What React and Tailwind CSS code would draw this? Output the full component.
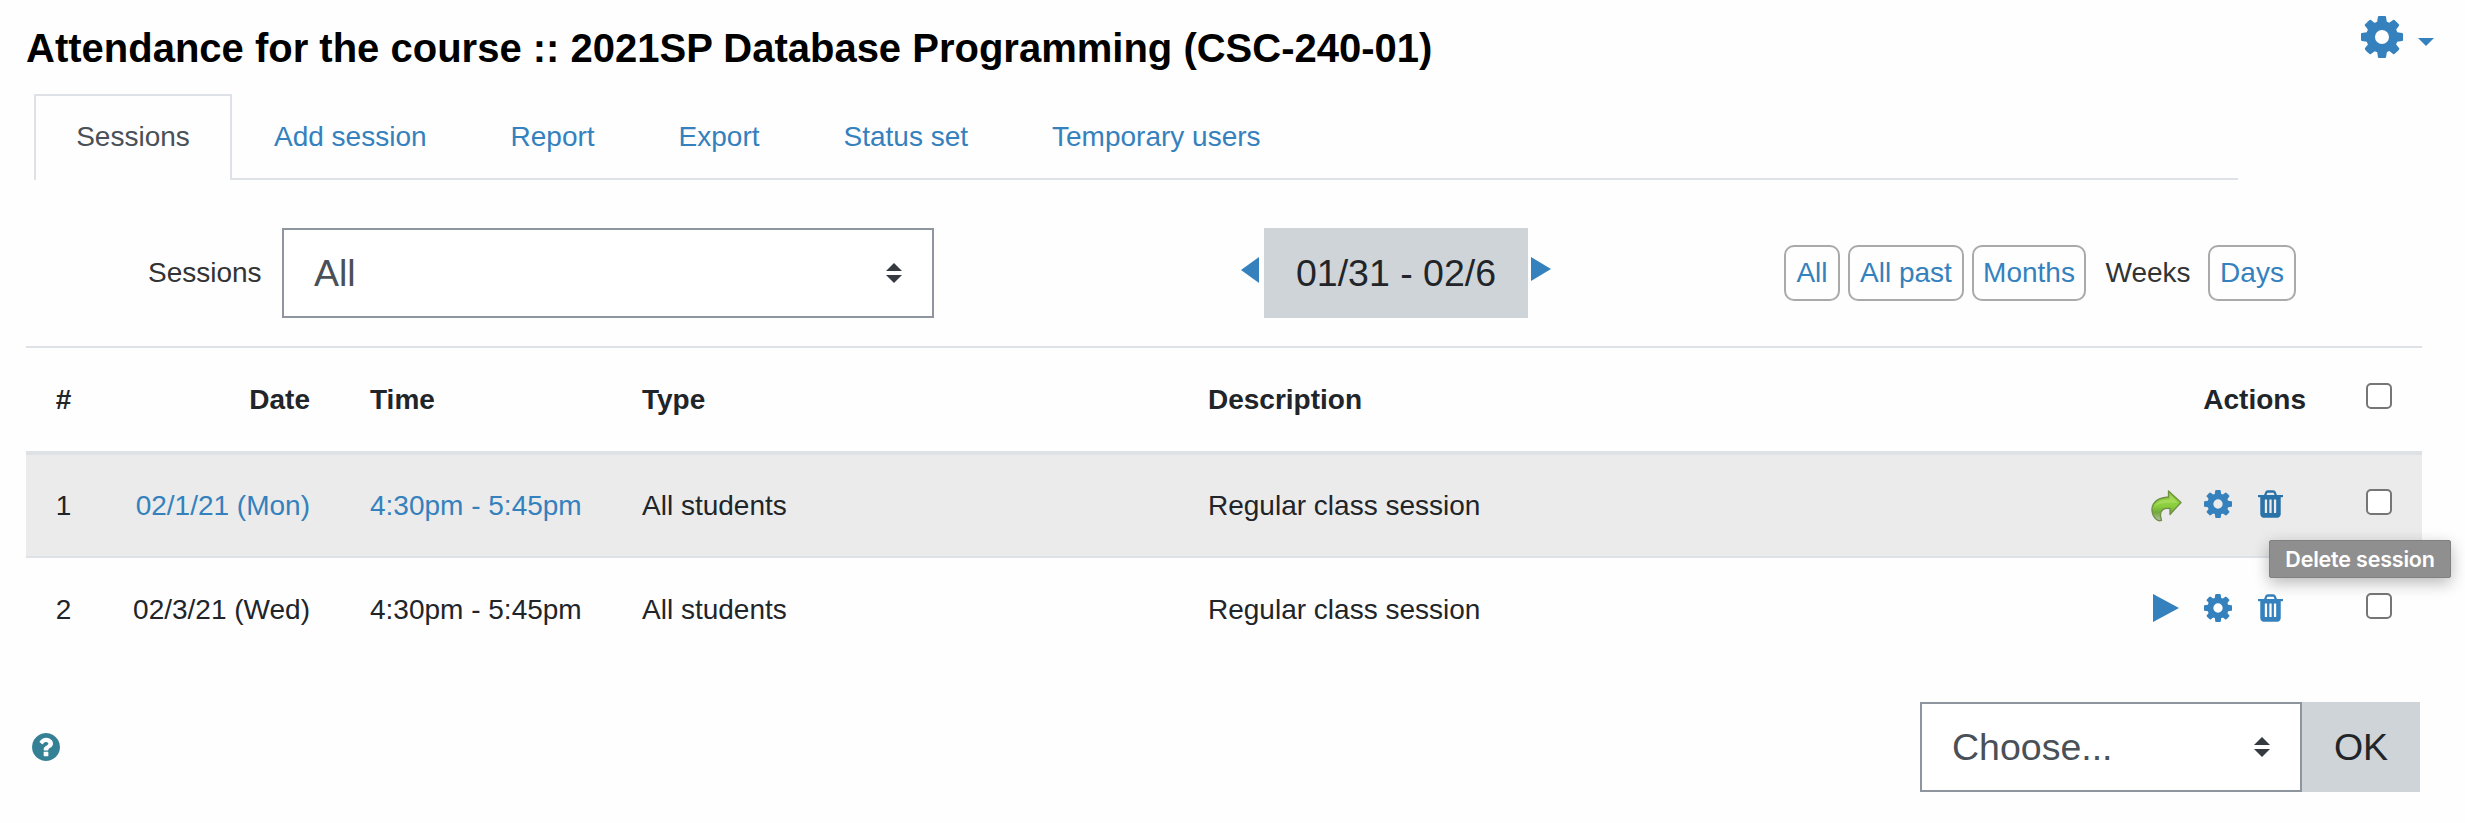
import React from 'react';

const COG =
  'M1152 896q0-106-75-181t-181-75-181 75-75 181 75 181 181 75 181-75 75-181zm512-109v222q0 12-8 23t-20 13l-185 28q-19 54-39 91 35 50 107 138 10 12 10 25t-9 23q-27 37-99 108t-94 71q-12 0-26-9l-138-108q-44 23-91 38-16 136-29 186-7 28-36 28h-222q-14 0-24.5-8.5t-11.5-21.5l-28-184q-49-16-90-37l-141 107q-10 9-25 9-14 0-25-11-126-114-165-168-7-10-7-23 0-12 8-23 15-21 51-66.5t54-70.5q-27-50-41-99l-183-27q-13-2-21-12.5t-8-23.5v-222q0-12 8-23t19-13l186-28q14-46 39-92-40-57-107-138-10-12-10-24 0-10 9-23 26-36 98.5-107.5t94.5-71.5q13 0 26 10l138 107q44-23 91-38 16-136 29-186 7-28 36-28h222q14 0 24.5 8.5t11.5 21.5l28 184q49 16 90 37l142-107q9-9 24-9 13 0 25 10 129 119 165 170 7 8 7 22 0 12-8 23-15 21-51 66.5t-54 70.5q26 50 41 98l183 28q13 2 21 12.5t8 23.5z';
const TRASH =
  'M704 1376v-704q0-14-9-23t-23-9h-64q-14 0-23 9t-9 23v704q0 14 9 23t23 9h64q14 0 23-9t9-23zm256 0v-704q0-14-9-23t-23-9h-64q-14 0-23 9t-9 23v704q0 14 9 23t23 9h64q14 0 23-9t9-23zm256 0v-704q0-14-9-23t-23-9h-64q-14 0-23 9t-9 23v704q0 14 9 23t23 9h64q14 0 23-9t9-23zm-544-992h448l-48-117q-7-9-17-11h-317q-10 2-17 11zm928 32v64q0 14-9 23t-23 9h-96v948q0 83-47 143.5t-113 60.5h-832q-66 0-113-58.5t-47-141.5v-952h-96q-14 0-23-9t-9-23v-64q0-14 9-23t23-9h309l70-167q15-37 54-63t79-26h320q40 0 79 26t54 63l70 167h309q14 0 23 9t9 23z';
const QUESTION =
  'M1024 1376v-192q0-14-9-23t-23-9h-192q-14 0-23 9t-9 23v192q0 14 9 23t23 9h192q14 0 23-9t9-23zm256-672q0-88-55.5-163t-138.5-116-170-41q-243 0-371 213-15 24 8 42l132 100q7 6 19 6 16 0 25-12 53-68 86-92 34-24 86-24 48 0 85.5 26t37.5 59q0 38-20 61t-68 45q-63 28-115.5 86.5t-52.5 125.5v36q0 14 9 23t23 9h192q14 0 23-9t9-23q0-19 21.5-49.5t54.5-49.5q32-18 49-28.5t46-35 44.5-48 28-60.5 12.5-81zm384 192q0 209-103 385.5t-279.5 279.5-385.5 103-385.5-103-279.5-279.5-103-385.5 103-385.5 279.5-279.5 385.5-103 385.5 103 279.5 279.5 103 385.5z';

function Glyph({ d, box = '128 128 1536 1536', className }) {
  return (
    <svg viewBox={box} className={className} fill="currentColor" aria-hidden="true">
      <path d={d} />
    </svg>
  );
}

function Sorter() {
  return (
    <svg viewBox="0 0 16 20" className="h-5 w-4 shrink-0 fill-[#343a40]" aria-hidden="true">
      <path d="M8 0l8 8H0zM0 12h16l-8 8z" />
    </svg>
  );
}

function ShareArrow() {
  return (
    <svg viewBox="0 0 32 32" className="h-8 w-8" aria-hidden="true">
      <defs>
        <linearGradient id="leaf" x1="0" y1="0" x2="0" y2="1">
          <stop offset="0" stopColor="#8fc93f" />
          <stop offset="0.5" stopColor="#8bd03c" />
          <stop offset="0.72" stopColor="#74a93c" />
          <stop offset="1" stopColor="#b4bfa6" />
        </linearGradient>
      </defs>
      <path
        d="M18.5 1L31 12.5 20 24.5V18.5C14 17.5 10 20 10.500 26L11.500 30.500C8 31.500 5 29 3 25 0 17 3 8 18.500 7z"
        fill="url(#leaf)"
        stroke="#6f8f45"
        strokeWidth="1.300"
        strokeLinejoin="round"
      />
      <path d="M5 16C7 11 12 9.500 20 9.500V5L28 12.500C20 14 10 12 5 16z" fill="#b5e36b" opacity="0.550" />
    </svg>
  );
}

function Checkbox() {
  return <span className="block h-[26px] w-[26px] rounded-[5px] border-2 border-[#767676] bg-white" />;
}

const tabs = ['Add session', 'Report', 'Export', 'Status set', 'Temporary users'];

const views = [
  { label: 'All', box: 'w-[56px]' },
  { label: 'All past', box: 'ml-2 w-[116px]' },
  { label: 'Months', box: 'ml-2 w-[114px]' },
  { label: 'Weeks', box: 'ml-[10px] w-[104px]', current: true },
  { label: 'Days', box: 'ml-2 w-[88px]' },
];

const rows = [
  { n: 1, date: '02/1/21 (Mon)', time: '4:30pm - 5:45pm', taken: true },
  { n: 2, date: '02/3/21 (Wed)', time: '4:30pm - 5:45pm', taken: false },
];

function SessionRow({ row }) {
  const link = row.taken ? 'text-[#3481bd]' : '';
  return (
    <tr className={row.taken ? 'h-[104px] border-b-2 border-[#dee2e6] bg-[#ebebeb]' : 'h-[104px]'}>
      <td className="text-center">{row.n}</td>
      <td className={`pr-[30px] text-right ${link}`}>{row.date}</td>
      <td className={`pl-[30px] ${link}`}>{row.time}</td>
      <td className="pl-[30px]">All students</td>
      <td className="pl-[30px]">Regular class session</td>
      <td>
        <div className="flex items-center justify-end pr-[52px] pb-1 text-[#3481bd]">
          {row.taken ? (
            <span className="mr-[22px] h-7 w-8">
              <ShareArrow />
            </span>
          ) : (
            <svg viewBox="0 0 26 28" className="mr-[25px] h-7 w-[26px] fill-current" aria-hidden="true">
              <path d="M0 0l26 14L0 28z" />
            </svg>
          )}
          <Glyph d={COG} className="mr-[26px] h-7 w-7" />
          <span className="relative">
            <Glyph
              d={TRASH}
              box="192 128 1408 1536"
              className={row.taken ? 'h-7 w-[25px] text-[#2b72a9]' : 'h-7 w-[25px]'}
            />
            {row.taken && (
              <span className="absolute top-[50px] left-[11px] z-10 flex h-[38px] w-[182px] items-center justify-center rounded-[2px] border border-[#808080] bg-[#8f8f8f] font-['Inter',sans-serif] text-[21.500px] font-semibold tracking-[-0.2px] whitespace-nowrap text-white shadow-[0_5px_16px_rgba(0,0,0,0.28)]">
                Delete session
              </span>
            )}
          </span>
        </div>
      </td>
      <td>
        <div className="flex justify-center pb-2">
          <Checkbox />
        </div>
      </td>
    </tr>
  );
}

export default function App() {
  return (
    <div className="flex h-[823px] w-[2465px] flex-col overflow-hidden bg-[#fefefe] font-['Liberation_Sans',Arial,sans-serif] text-[28px] leading-[42px] text-[#212529]">
      <header className="flex h-[94px] items-start justify-between pr-[31px] pl-[26px]">
        <h1 className="pt-6 text-[40px] leading-[48px] font-bold whitespace-nowrap text-black">
          Attendance for the course :: 2021SP Database Programming (CSC-240-01)
        </h1>
        <div className="flex items-center pt-4 text-[#3481bd]">
          <Glyph d={COG} className="h-[42px] w-[42px]" />
          <svg viewBox="0 0 16 8" className="mt-[10px] ml-[15px] h-2 w-4 fill-current" aria-hidden="true">
            <path d="M0 0h16L8 8z" />
          </svg>
        </div>
      </header>

      <nav className="ml-[34px] flex h-[86px] w-[2204px] text-[#3481bd]">
        <span className="w-[198px] border-2 border-b-0 border-[#dee2e6] pt-5 text-center text-[#495057]">
          Sessions
        </span>
        <div className="flex flex-1 border-b-2 border-[#dee2e6]">
          {tabs.map((t) => (
            <a key={t} className="px-[42px] pt-[22px] whitespace-nowrap">
              {t}
            </a>
          ))}
        </div>
      </nav>

      <section className="mt-12 flex h-[90px] items-center">
        <span className="ml-[148px] w-[134px] text-[#333]">Sessions</span>
        <div className="flex h-[90px] w-[652px] items-center justify-between border-2 border-[#8f959e] bg-white pr-[30px] pl-[30px] text-[37.500px] text-[#495057]">
          <span>All</span>
          <Sorter />
        </div>
        <svg viewBox="0 0 18 26" className="mb-[7px] ml-[307px] h-[26px] w-[18px] fill-[#3481bd]" aria-hidden="true">
          <path d="M18 0v26L0 13z" />
        </svg>
        <div className="ml-[5px] flex h-[90px] w-[264px] items-center justify-center bg-[#cfd4d8] text-[37.500px] whitespace-nowrap">
          01/31 - 02/6
        </div>
        <svg viewBox="0 0 20 24" className="mb-2 ml-[3px] h-6 w-5 fill-[#3481bd]" aria-hidden="true">
          <path d="M0 0v24l20-12z" />
        </svg>
        <div className="ml-[233px] flex">
          {views.map((v) => (
            <span
              key={v.label}
              className={`${v.box} flex h-14 items-center justify-center whitespace-nowrap ${
                v.current ? 'text-[#333]' : 'rounded-[10px] border-2 border-[#aaa] text-[#3481bd]'
              }`}
            >
              {v.label}
            </span>
          ))}
        </div>
      </section>

      <table className="mt-7 ml-[26px] w-[2396px] table-fixed border-collapse">
        <colgroup>
          <col className="w-[75px]" />
          <col className="w-[239px]" />
          <col className="w-[272px]" />
          <col className="w-[566px]" />
          <col className="w-[802px]" />
          <col className="w-[355px]" />
          <col className="w-[87px]" />
        </colgroup>
        <thead>
          <tr className="h-[106px] border-t-2 border-b-4 border-[#dee2e6] text-left">
            <th>
              <span className="block text-center">#</span>
            </th>
            <th className="pr-[30px] text-right">Date</th>
            <th className="pl-[30px]">Time</th>
            <th className="pl-[30px]">Type</th>
            <th className="pl-[30px]">Description</th>
            <th className="pr-[29px] text-right">Actions</th>
            <th>
              <div className="flex justify-center pb-2">
                <Checkbox />
              </div>
            </th>
          </tr>
        </thead>
        <tbody>
          {rows.map((r) => (
            <SessionRow key={r.n} row={r} />
          ))}
        </tbody>
      </table>

      <footer className="mt-auto mb-[31px] flex h-[90px] items-center justify-between pr-[45px] pl-8">
        <Glyph d={QUESTION} className="h-7 w-7 text-[#348094]" />
        <div className="flex h-full text-[37.500px]">
          <div className="flex w-[382px] items-center justify-between border-2 border-[#8f959e] bg-white pr-[30px] pl-[30px] text-[#495057]">
            <span>Choose...</span>
            <Sorter />
          </div>
          <div className="flex w-[118px] items-center justify-center bg-[#cfd4d8]">OK</div>
        </div>
      </footer>
    </div>
  );
}
